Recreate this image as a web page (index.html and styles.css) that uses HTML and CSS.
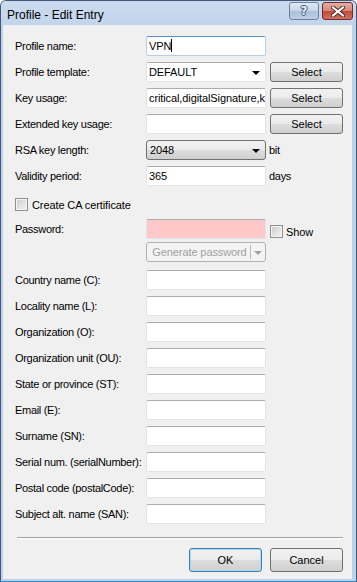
FILE: index.html
```html
<!DOCTYPE html>
<html>
<head>
    <title>Profile - Edit Entry</title>
    <link rel="stylesheet" href="styles.css">
</head>
<body>
    <div class="window">
        <div class="titlebar">
            <span class="title">Profile - Edit Entry</span>
            <div class="caption-buttons">
                <button class="cap help">?</button>
                <button class="cap close">
                    <svg width="14" height="11" viewBox="0 0 14 11">
                        <path d="M2 1.5 L12 9.5 M12 1.5 L2 9.5" stroke="#4a2a2a" stroke-width="4" stroke-linecap="square"/>
                        <path d="M2 1.5 L12 9.5 M12 1.5 L2 9.5" stroke="#ffffff" stroke-width="2" stroke-linecap="square"/>
                    </svg>
                </button>
            </div>
        </div>

        <div class="client">
            <div class="form">
                <div class="row">
                    <label>Profile name:</label>
                    <div class="edit focus">VPN<span class="caret"></span></div>
                </div>
                <div class="row">
                    <label>Profile template:</label>
                    <div class="edit combo">DEFAULT<span class="arrow"></span></div>
                    <button class="btn select">Select</button>
                </div>
                <div class="row">
                    <label>Key usage:</label>
                    <div class="edit">critical,digitalSignature,k</div>
                    <button class="btn select">Select</button>
                </div>
                <div class="row">
                    <label>Extended key usage:</label>
                    <div class="edit"></div>
                    <button class="btn select">Select</button>
                </div>
                <div class="row">
                    <label>RSA key length:</label>
                    <div class="dropdown">2048<span class="arrow"></span></div>
                    <span class="unit">bit</span>
                </div>
                <div class="row">
                    <label>Validity period:</label>
                    <div class="edit">365</div>
                    <span class="unit">days</span>
                </div>

                <div class="check-row">
                    <span class="checkbox"></span>
                    <span class="check-label">Create CA certificate</span>
                </div>

                <div class="row">
                    <label>Password:</label>
                    <div class="edit invalid"></div>
                    <span class="checkbox show-box"></span>
                    <span class="check-label show-label">Show</span>
                </div>
                <div class="row gen-row">
                    <label></label>
                    <div class="split disabled">
                        <span class="split-text">Generate password</span>
                        <span class="split-arrow"><span class="arrow"></span></span>
                    </div>
                </div>

                <div class="row dn-first">
                    <label>Country name (C):</label>
                    <div class="edit"></div>
                </div>
                <div class="row">
                    <label>Locality name (L):</label>
                    <div class="edit"></div>
                </div>
                <div class="row">
                    <label>Organization (O):</label>
                    <div class="edit"></div>
                </div>
                <div class="row">
                    <label>Organization unit (OU):</label>
                    <div class="edit"></div>
                </div>
                <div class="row">
                    <label>State or province (ST):</label>
                    <div class="edit"></div>
                </div>
                <div class="row">
                    <label>Email (E):</label>
                    <div class="edit"></div>
                </div>
                <div class="row">
                    <label>Surname (SN):</label>
                    <div class="edit"></div>
                </div>
                <div class="row">
                    <label>Serial num. (serialNumber):</label>
                    <div class="edit"></div>
                </div>
                <div class="row">
                    <label>Postal code (postalCode):</label>
                    <div class="edit"></div>
                </div>
                <div class="row">
                    <label>Subject alt. name (SAN):</label>
                    <div class="edit"></div>
                </div>
            </div>

            <div class="separator"></div>

            <div class="footer">
                <button class="btn default">OK</button>
                <button class="btn">Cancel</button>
            </div>
        </div>
    </div>
</body>
</html>
```

FILE: styles.css
```css
body {
    margin: 0;
    width: 357px;
    height: 582px;
    overflow: hidden;
    font-family: "Liberation Sans", Arial, sans-serif;
    font-size: 11px;
    letter-spacing: -0.3px;
    color: #000;
}

/* Window frame */
.window {
    box-sizing: border-box;
    width: 357px;
    height: 582px;
    border: 1px solid #44587a;
    border-bottom-color: #2f8fc4;
    border-radius: 6px 6px 0 0;
    background: #bcd2ec;
    display: flex;
    flex-direction: column;
}

.titlebar {
    height: 24px;
    display: flex;
    align-items: center;
    justify-content: space-between;
    background: linear-gradient(#cbdbef, #c2d5ec);
    border-radius: 5px 5px 0 0;
}

.title {
    font-size: 12px;
    letter-spacing: 0;
    margin-left: 6px;
    margin-top: 4px;
    color: #000;
}

.caption-buttons {
    display: flex;
    gap: 3px;
    margin-right: 3px;
    align-self: flex-start;
    margin-top: 1px;
}

.cap {
    height: 18px;
    padding: 0;
    border: 1px solid #6f7f98;
    border-radius: 3px;
    display: flex;
    align-items: center;
    justify-content: center;
}

.help {
    width: 30px;
    background: linear-gradient(#dfe9f6 0%, #c6d6ea 50%, #a9bfdb 51%, #bcd0e8 100%);
    font-family: "DejaVu Sans", sans-serif;
    font-size: 12px;
    font-weight: bold;
    color: #eef4fb;
    text-shadow: 1px 0 0 #3d5272, -1px 0 0 #3d5272, 0 1px 0 #3d5272, 0 -1px 0 #3d5272;
}

.close {
    width: 31px;
    border-color: #6e2d29;
    background: linear-gradient(#e7ada4 0%, #d68677 50%, #c04a3b 51%, #d2705f 100%);
}

/* Client area */
.client {
    flex: 1;
    margin: 0 4px 2px 2px;
    background: #f0f0f0;
    padding: 11px 9px 0 12px;
    display: flex;
    flex-direction: column;
}

.form {
    display: flex;
    flex-direction: column;
    gap: 6px;
}

.row {
    display: flex;
    align-items: center;
    height: 20px;
}

.row label {
    width: 131px;
    flex-shrink: 0;
}

.edit {
    box-sizing: border-box;
    width: 120px;
    height: 20px;
    background: #fff;
    border: 1px solid #e2e3ea;
    border-top-color: #abadb3;
    border-radius: 2px;
    padding: 0 1px 0 2px;
    line-height: 18px;
    letter-spacing: -0.1px;
    overflow: hidden;
    white-space: nowrap;
}

.edit.focus {
    border-color: #b5cfe7;
    border-top-color: #5a94c8;
}

.caret {
    display: inline-block;
    width: 1px;
    height: 13px;
    background: #000;
    vertical-align: -2px;
}

.edit.invalid {
    background: #ffc8c8;
}

.edit.combo {
    display: flex;
    align-items: center;
    justify-content: space-between;
    padding-right: 5px;
}

.arrow {
    width: 0;
    height: 0;
    border-left: 4px solid transparent;
    border-right: 4px solid transparent;
    border-top: 4px solid #000;
    margin-top: 1px;
}

.dropdown {
    box-sizing: border-box;
    width: 120px;
    height: 20px;
    border: 1px solid #707070;
    border-radius: 3px;
    background: linear-gradient(#f2f2f2 0%, #ebebeb 50%, #dddddd 51%, #cfcfcf 100%);
    display: flex;
    align-items: center;
    justify-content: space-between;
    padding: 0 5px 0 3px;
    letter-spacing: -0.1px;
}

.unit {
    margin-left: 3px;
}

.btn {
    box-sizing: border-box;
    width: 73px;
    height: 20px;
    padding: 0;
    border: 1px solid #707070;
    border-radius: 3px;
    background: linear-gradient(#f2f2f2 0%, #ebebeb 50%, #dddddd 51%, #cfcfcf 100%);
    font-family: "Liberation Sans", Arial, sans-serif;
    font-size: 11px;
    letter-spacing: 0;
    color: #000;
}

.select {
    margin-left: 4px;
}

/* Checkboxes */
.check-row {
    display: flex;
    align-items: center;
    height: 13px;
    margin: 6px 0 2px 0;
}

.checkbox {
    box-sizing: border-box;
    width: 13px;
    height: 13px;
    border: 1px solid #8e8f8f;
    background: linear-gradient(135deg, #cbcbcb, #f4f4f4);
    box-shadow: inset 0 0 0 1px #f4f4f4;
    flex-shrink: 0;
}

.check-label {
    margin-left: 4px;
    letter-spacing: -0.1px;
}

.show-box {
    margin-left: 4px;
    margin-top: 5px;
}

.show-label {
    margin-top: 5px;
    margin-left: 3px;
}

/* Split button (disabled) */
.gen-row {
    margin-top: -3px;
}

.split {
    box-sizing: border-box;
    width: 120px;
    height: 20px;
    border: 1px solid #adb2b5;
    border-radius: 3px;
    background: #f4f4f4;
    display: flex;
    align-items: center;
    color: #a0a0a0;
    letter-spacing: -0.1px;
}

.split-text {
    flex: 1;
    text-align: center;
    border-right: 1px solid #b8b8b8;
    line-height: 14px;
    margin-left: 2px;
}

.split-arrow {
    width: 14px;
    display: flex;
    justify-content: center;
}

.split-arrow .arrow {
    border-top-color: #a0a0a0;
}

.dn-first {
    margin-top: 2px;
}

/* Footer */
.separator {
    margin-top: 13px;
    height: 1px;
    background: #a0a0a0;
    border-bottom: 1px solid #ffffff;
    margin-left: 2px;
}

.footer {
    display: flex;
    justify-content: flex-end;
    gap: 8px;
    margin-top: 9px;
}

.footer .btn {
    height: 24px;
}

.btn.default {
    border-color: #3c7fb1;
    box-shadow: inset 0 0 0 1px #a6dbf5;
}
```
